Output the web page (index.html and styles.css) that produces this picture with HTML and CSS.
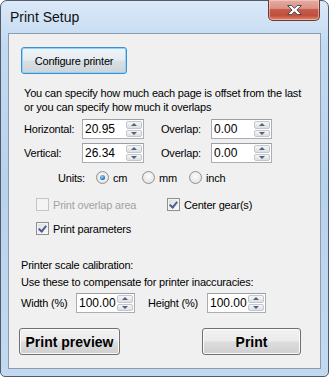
FILE: index.html
```html
<!DOCTYPE html>
<html lang="en">
<head>
    <meta charset="UTF-8">
    <title>Print Setup</title>
    <link rel="stylesheet" href="styles.css">
</head>
<body>
    <div class="window">
        <div class="titlebar">
            <span class="title">Print Setup</span>
            <div class="close">
                <svg width="17" height="12" viewBox="0 0 17 12">
                    <path d="M1.5 1.5h4.2l2.8 2.8 2.8-2.8h4.2l-4.6 4.5 4.6 4.5h-4.2l-2.8-2.8-2.8 2.8h-4.2l4.6-4.5z" fill="#fff" stroke="#4a4e57" stroke-width="1"/>
                </svg>
            </div>
        </div>
        <div class="client">
            <button class="btn btn_config">Configure printer</button>
            <p class="hint">You can specify how much each page is offset from the last<br>or you can specify how much it overlaps</p>

            <!-- offsets -->
            <div class="offsets">
                <span class="lbl">Horizontal:</span>
                <div class="spin"><span class="val">20.95</span><span class="arrows"><i class="up"></i><i class="down"></i></span></div>
                <span class="lbl lbl_overlap">Overlap:</span>
                <div class="spin"><span class="val">0.00</span><span class="arrows"><i class="up"></i><i class="down"></i></span></div>

                <span class="lbl">Vertical:</span>
                <div class="spin"><span class="val">26.34</span><span class="arrows"><i class="up"></i><i class="down"></i></span></div>
                <span class="lbl lbl_overlap">Overlap:</span>
                <div class="spin"><span class="val">0.00</span><span class="arrows"><i class="up"></i><i class="down"></i></span></div>
            </div>

            <div class="units">
                <span class="units_lbl">Units:</span>
                <label class="opt opt_cm"><span class="radio checked"></span>cm</label>
                <label class="opt opt_mm"><span class="radio"></span>mm</label>
                <label class="opt"><span class="radio"></span>inch</label>
            </div>

            <div class="checks">
                <label class="opt disabled"><span class="check"></span>Print overlap area</label>
                <label class="opt"><span class="check on"></span>Center gear(s)</label>
                <label class="opt"><span class="check on"></span>Print parameters</label>
            </div>

            <p class="calib calib_first">Printer scale calibration:</p>
            <p class="calib">Use these to compensate for printer inaccuracies:</p>

            <div class="scale">
                <span class="scale_lbl">Width (%)</span>
                <div class="spin spin_scale"><span class="val">100.00</span><span class="arrows"><i class="up"></i><i class="down"></i></span></div>
                <span class="scale_lbl scale_lbl2">Height (%)</span>
                <div class="spin spin_scale"><span class="val">100.00</span><span class="arrows"><i class="up"></i><i class="down"></i></span></div>
            </div>

            <div class="actions">
                <button class="btn btn_big btn_preview">Print preview</button>
                <button class="btn btn_big btn_print">Print</button>
            </div>
        </div>
    </div>
</body>
</html>
```

FILE: styles.css
```css
* {
    margin: 0;
    padding: 0;
}

body {
    font-family: "Liberation Sans", Arial, sans-serif;
    font-size: 11px;
    letter-spacing: -0.2px;
    color: #000;
    background: #fff;
}

.window {
    width: 329px;
    height: 377px;
    box-sizing: border-box;
    border: 1px solid #4f5b6a;
    border-radius: 7px 7px 5px 5px;
    background: linear-gradient(to bottom, #dbe9f8 0%, #c2d9f1 12%, #b9d2ec 50%, #c3d9f0 100%);
    padding: 0 7px 7px;
    display: flex;
    flex-direction: column;
}

/* title bar */

.titlebar {
    height: 32px;
    display: flex;
    justify-content: space-between;
    align-items: flex-start;
}

.title {
    font-size: 14px;
    letter-spacing: 0;
    line-height: 17px;
    padding: 8px 0 0 2px;
    color: #111;
}

.close {
    width: 52px;
    height: 21px;
    box-sizing: border-box;
    margin: -1px 1px 0 0;
    border: 1px solid #6c3a36;
    border-top: none;
    border-radius: 0 0 5px 5px;
    background: linear-gradient(to bottom, #e6aba2 0%, #d99388 42%, #c65a49 48%, #c0503f 78%, #e0896a 100%);
    display: flex;
    align-items: center;
    justify-content: center;
    box-shadow: inset 0 0 0 1px rgba(255, 220, 210, 0.5);
}

/* client area */

.client {
    flex: 1;
    border: 1px solid #8b9bb0;
    background: #f0f0f0;
    padding: 0 12px;
}

.btn {
    display: block;
    font-family: "Liberation Sans", Arial, sans-serif;
    font-size: 11px;
    letter-spacing: -0.2px;
    color: #000;
    border: 1px solid #707070;
    border-radius: 3px;
    background: linear-gradient(to bottom, #f2f2f2 0%, #ebebeb 48%, #dddddd 52%, #cfcfcf 100%);
    box-shadow: inset 0 0 0 1px #fbfbfb;
}

.btn_config {
    width: 106px;
    height: 27px;
    margin-top: 13px;
    border-color: #3c8fd0;
    box-shadow: inset 0 0 0 1px #8fd3f5;
    background: linear-gradient(to bottom, #eef3f7 0%, #e6ecf0 48%, #d9e0e5 52%, #ccd4da 100%);
}

.hint {
    margin: 12px 0 0 3px;
    line-height: 14px;
    white-space: nowrap;
}

/* number fields */

.offsets {
    display: grid;
    grid-template-columns: 58px 62px 67px 61px;
    grid-auto-rows: 20px;
    row-gap: 4px;
    margin: 5px 0 0 3px;
    align-items: center;
}

.lbl_overlap {
    padding-left: 17px;
}

.spin {
    height: 20px;
    box-sizing: border-box;
    display: flex;
    border: 1px solid #abadb3;
    border-top-color: #9a9ea6;
    background: #fff;
}

.val {
    flex: 1;
    font-size: 12px;
    letter-spacing: 0;
    line-height: 18px;
    padding-left: 2px;
}

.arrows {
    width: 16px;
    display: flex;
    flex-direction: column;
    gap: 1px;
    padding: 1px 1px 1px 0;
}

.arrows i {
    flex: 1;
    border: 1px solid #c2c7ce;
    border-radius: 2px;
    background: linear-gradient(to bottom, #f6f6f6, #dedede);
    display: flex;
    align-items: center;
    justify-content: center;
}

.arrows i::after {
    content: "";
    border-left: 3px solid transparent;
    border-right: 3px solid transparent;
}

.arrows .up::after {
    border-bottom: 3px solid #4d6184;
}

.arrows .down::after {
    border-top: 3px solid #4d6184;
}

/* radios and checks */

.opt {
    display: flex;
    align-items: center;
    gap: 4px;
}

.units {
    display: flex;
    align-items: center;
    height: 13px;
    margin: 8px 0 0 37px;
}

.units_lbl {
    width: 38px;
}

.opt_cm {
    width: 46px;
}

.opt_mm {
    width: 47px;
}

.radio {
    width: 13px;
    height: 13px;
    box-sizing: border-box;
    border: 1px solid #8e8f8f;
    border-radius: 50%;
    background: radial-gradient(circle at 50% 40%, #fcfcfc, #dcdcdc);
    display: flex;
    align-items: center;
    justify-content: center;
}

.radio.checked::after {
    content: "";
    width: 5px;
    height: 5px;
    border-radius: 50%;
    background: radial-gradient(circle at 40% 35%, #9ad6ff, #1d6ab8 70%, #0e3f7a);
}

.checks {
    display: grid;
    grid-template-columns: 131px 120px;
    grid-auto-rows: 13px;
    row-gap: 11px;
    margin: 14px 0 0 15px;
}

.check {
    width: 13px;
    height: 13px;
    box-sizing: border-box;
    border: 1px solid #8e8f8f;
    background: linear-gradient(135deg, #dcdcdc, #fbfbfb);
    box-shadow: inset 0 0 0 1px #f4f4f4;
    position: relative;
}

.check.on::after {
    content: "";
    position: absolute;
    left: 3px;
    top: 1px;
    width: 3px;
    height: 6px;
    border: solid #4a5c90;
    border-width: 0 2px 2px 0;
    transform: rotate(40deg);
}

.disabled {
    color: #a3a3a3;
}

.disabled .check {
    border-color: #c5c5c5;
    background: #f4f4f4;
}

/* calibration */

.calib {
    line-height: 14px;
    margin-top: 3px;
}

.calib_first {
    margin-top: 23px;
}

.scale {
    display: flex;
    align-items: center;
    margin-top: 4px;
}

.scale_lbl {
    width: 55px;
}

.scale_lbl2 {
    width: 59px;
    padding-left: 13px;
}

.spin_scale {
    width: 59px;
}

/* bottom buttons */

.actions {
    display: flex;
    justify-content: space-between;
    margin: 15px 7px 0 -2px;
}

.btn_big {
    height: 27px;
    font-size: 14px;
    font-weight: bold;
    letter-spacing: 0;
}

.btn_preview {
    width: 101px;
}

.btn_print {
    width: 99px;
}
```
